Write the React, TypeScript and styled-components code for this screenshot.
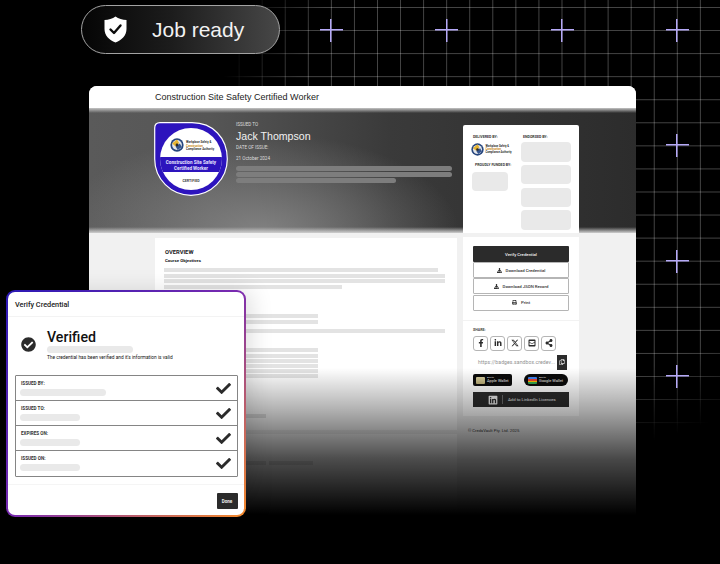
import React from 'react'
import styled, { createGlobalStyle } from 'styled-components'
import { FaCheck, FaCheckCircle, FaDownload, FaPrint, FaFacebookF, FaLinkedinIn, FaShareAlt, FaEnvelopeSquare, FaRegCopy, FaLinkedin } from 'react-icons/fa'
import { FaXTwitter } from 'react-icons/fa6'

const GlobalStyle = createGlobalStyle`
  html, body {
    margin: 0;
    padding: 0;
    background: #000;
  }
  * {
    box-sizing: border-box;
  }
`

const Page = styled.div`
  position: relative;
  width: 720px;
  height: 564px;
  overflow: hidden;
  background: #000;
  padding-top: 5px;
  font-family: Roboto, 'Liberation Sans', sans-serif;
`

const GridLayer = styled.div`
  position: absolute;
  inset: 0;
  background-image:
    linear-gradient(to right, rgba(255, 255, 255, 0.27) 1px, transparent 1px),
    linear-gradient(to bottom, rgba(255, 255, 255, 0.27) 1px, transparent 1px);
  background-size: 23.07px 23.07px;
  background-position: 8px 7px;
  mask-image: radial-gradient(ellipse 350px 330px at 570px 120px, #000 78%, transparent 100%);
`

const Plus = styled.span<{ $x: number; $y: number }>`
  position: absolute;
  left: ${p => p.$x - 12}px;
  top: ${p => p.$y - 12}px;
  width: 24px;
  height: 24px;
  background:
    linear-gradient(#b5a9f7, #b5a9f7) center / 23px 1.5px no-repeat,
    linear-gradient(#b5a9f7, #b5a9f7) center / 1.5px 23px no-repeat;
`

const Pill = styled.div`
  position: relative;
  width: 199px;
  height: 49px;
  margin-left: 81px;
  display: flex;
  align-items: center;
  padding-left: 22px;
  gap: 25px;
  border: 1px solid #a3a3a3;
  border-radius: 25px;
  background: linear-gradient(90deg, #050505 0%, #1c1c1c 45%, #474747 100%);
`

const PillText = styled.span`
  font-family: 'Liberation Sans', Arial, sans-serif;
  font-size: 21px;
  color: #f2f2f2;
`

const CertWindow = styled.div`
  position: relative;
  width: 547px;
  height: 429px;
  margin: 32px 0 0 89px;
  border-radius: 8px 8px 0 0;
  overflow: hidden;
  background: #f1f1f1;
  &::after {
    content: '';
    position: absolute;
    inset: 282px 0 0 0;
    background: linear-gradient(180deg, rgba(0, 0, 0, 0) 0%, rgba(0, 0, 0, 0.3) 28%, rgba(0, 0, 0, 0.7) 62%, #000 100%);
  }
`

const TitleBar = styled.div`
  height: 22px;
  display: flex;
  align-items: center;
  padding-left: 66px;
  background: #fff;
  color: #222;
  font-family: 'Liberation Sans', Arial, sans-serif;
  font-size: 9px;
`

const Hero = styled.div`
  height: 125px;
  display: flex;
  align-items: flex-start;
  padding: 14px 57px 0 65px;
  background:
    linear-gradient(180deg, #c4c4c4 0, rgba(90, 90, 90, 0) 5px, rgba(90, 90, 90, 0) 119px, #cfcfcf 125px),
    radial-gradient(ellipse 200px 100px at 170px 125px, #828282, rgba(120, 120, 120, 0)),
    linear-gradient(90deg, #5a5a5a 0%, #565656 22%, #3a3a3a 55%, #2c2c2c 100%);
`

const Info = styled.div`
  width: 216px;
  margin-left: 8px;
  display: flex;
  flex-direction: column;
  color: #eee;
`

const TinyLabel = styled.div<{ $mt?: number }>`
  font-size: 4.6px;
  line-height: 6px;
  margin-top: ${p => p.$mt || 0}px;
  color: #ddd;
`

const Recipient = styled.div`
  font-family: 'Liberation Sans', Arial, sans-serif;
  font-size: 10.6px;
  line-height: 14px;
  margin-top: 1px;
  color: #f1f1f1;
`

const HeroBar = styled.div<{ $w: number; $mt?: number }>`
  width: ${p => p.$w}px;
  height: 5px;
  margin-top: ${p => p.$mt ?? 1}px;
  border-radius: 3px;
  background: #7d7d7d;
`

const HeroCard = styled.div`
  width: 116px;
  height: 108px;
  margin: 3px 0 0 11px;
  padding: 10px 8px 0 9px;
  display: flex;
  justify-content: space-between;
  background: #fff;
  border-radius: 2px 2px 0 0;
`

const HeroCol = styled.div<{ $w: number }>`
  width: ${p => p.$w}px;
  display: flex;
  flex-direction: column;
`

const CardLabel = styled.div<{ $mt?: number; $ml?: number }>`
  font-size: 3.6px;
  line-height: 5px;
  font-weight: 700;
  color: #333;
  margin-top: ${p => p.$mt || 0}px;
  margin-left: ${p => p.$ml || 0}px;
`

const GrayBox = styled.div<{ $w: number; $h: number; $mt: number }>`
  width: ${p => p.$w}px;
  height: ${p => p.$h}px;
  margin-top: ${p => p.$mt}px;
  background: #e9e9e9;
  border-radius: 4px;
`

const LogoRow = styled.div`
  display: flex;
  align-items: center;
  gap: 1.5px;
  margin-top: 3px;
  margin-left: -1px;
`

const LogoText = styled.div`
  font-size: 2.7px;
  line-height: 3.2px;
  font-weight: 700;
  color: #333;
  white-space: nowrap;
  & > i {
    font-style: normal;
    color: #c9871d;
  }
`

const Body = styled.div`
  display: flex;
  gap: 6px;
  padding: 5px 0 0 66px;
`

const LeftCol = styled.div`
  width: 302px;
  display: flex;
  flex-direction: column;
  gap: 4px;
`

const OverviewCard = styled.div<{ $h: number }>`
  height: ${p => p.$h}px;
  padding: 11px 10px 0 9px;
  background: #fff;
  display: flex;
  flex-direction: column;
`

const OverviewTitle = styled.div`
  font-size: 5.8px;
  line-height: 7px;
  font-weight: 700;
  margin-left: 1px;
  color: #222;
`

const SubTitle = styled.div`
  font-size: 4.4px;
  line-height: 6px;
  font-weight: 700;
  margin: 2px 0 0 1px;
  color: #222;
`

const Line = styled.div<{ $w: number; $mt?: number }>`
  width: ${p => p.$w}px;
  height: 4px;
  margin-top: ${p => p.$mt ?? 1.5}px;
  background: #e3e3e3;
  flex: none;
`

const LineRow = styled.div<{ $mt: number }>`
  display: flex;
  gap: 3px;
  margin-top: ${p => p.$mt}px;
`

const RightCol = styled.div`
  width: 116px;
  margin-top: -1px;
  display: flex;
  flex-direction: column;
`

const SideCard = styled.div`
  height: 179px;
  padding: 9px 10px 0;
  background: #fff;
  display: flex;
  flex-direction: column;
`

const SideButton = styled.div<{ $dark?: boolean }>`
  height: 16px;
  margin-bottom: 0.2px;
  flex: none;
  display: flex;
  align-items: center;
  justify-content: center;
  gap: 4px;
  font-size: 4.3px;
  font-weight: 500;
  color: ${p => (p.$dark ? '#eee' : '#333')};
  background: ${p => (p.$dark ? '#2b2b2b' : '#fff')};
  border: ${p => (p.$dark ? 'none' : '1px solid #b5b5b5')};
  border-radius: 1px;
`

const ShareSection = styled.div`
  margin: 9px -10px 0;
  padding: 7px 10px 0;
  border-top: 1px solid #f2f2f2;
`

const ShareLabel = styled.div`
  font-size: 3.6px;
  line-height: 5px;
  font-weight: 700;
  color: #444;
`

const ShareRow = styled.div`
  display: flex;
  gap: 2px;
  margin-top: 3px;
`

const ShareIcon = styled.div`
  width: 15px;
  height: 15px;
  display: flex;
  align-items: center;
  justify-content: center;
  border: 1px solid #b5b5b5;
  border-radius: 3px;
  color: #2b2b2b;
  font-size: 8px;
`

const UrlRow = styled.div`
  display: flex;
  align-items: center;
  justify-content: space-between;
  height: 15px;
  margin-top: 4px;
  padding: 0 2px 0 5px;
  font-size: 5.1px;
  letter-spacing: 0.1px;
  white-space: nowrap;
  color: #8f8f8f;
`

const CopyButton = styled.div`
  width: 10px;
  height: 15px;
  display: flex;
  align-items: center;
  justify-content: center;
  background: #2b2b2b;
  color: #eee;
  font-size: 6px;
`

const WalletRow = styled.div`
  display: flex;
  justify-content: space-between;
  margin-top: 4px;
  margin-right: 1px;
`

const WalletButton = styled.div<{ $w: number; $r: number }>`
  width: ${p => p.$w}px;
  height: 12.5px;
  border-radius: ${p => p.$r}px;
  background: #0b0b0b;
  display: flex;
  align-items: center;
  gap: 2px;
  padding-left: ${p => p.$r > 3 ? 4 : 3}px;
  color: #eee;
`

const WalletCard = styled.div<{ $google?: boolean }>`
  width: 9px;
  height: 7px;
  border-radius: 1px;
  flex: none;
  background: ${p =>
    p.$google
      ? 'linear-gradient(180deg, #4285f4 0 30%, #ea4335 30% 55%, #fbbc04 55% 78%, #34a853 78%)'
      : 'linear-gradient(180deg, #d8cfa0, #b9ad76)'};
`

const WalletText = styled.div`
  font-size: 3.9px;
  line-height: 3.9px;
  white-space: nowrap;
  & > small {
    display: block;
    font-size: 2.4px;
    line-height: 2.8px;
  }
`

const LinkedInButton = styled.div`
  height: 15px;
  margin-top: 6px;
  display: flex;
  align-items: center;
  background: #2b2b2b;
  color: #eee;
  font-size: 4.3px;
  padding-left: 15px;
  & > svg {
    font-size: 10px;
    margin-right: 4px;
  }
`

const LinkedInDivider = styled.span`
  width: 1px;
  height: 9px;
  margin-right: 5px;
  background: #6b6b6b;
`

const Copyright = styled.div`
  margin: 12px 0 0 5px;
  font-size: 4.2px;
  line-height: 6px;
  color: #333;
`

const Modal = styled.div`
  position: absolute;
  left: 5.5px;
  top: 290px;
  width: 240px;
  height: 226.5px;
  padding: 2px;
  border-radius: 9px;
  background: linear-gradient(135deg, #2a18b4 0%, #7a2bb0 50%, #f58a2a 100%);
  box-shadow: 6px 0 22px rgba(0, 0, 0, 0.12);
  z-index: 2;
`

const ModalInner = styled.div`
  width: 100%;
  height: 100%;
  border-radius: 7px;
  background: #fff;
  display: flex;
  flex-direction: column;
`

const ModalHeader = styled.div`
  height: 25px;
  flex: none;
  display: flex;
  align-items: center;
  padding-left: 7.5px;
  border-bottom: 1px solid #f3f3f3;
  font-size: 7.3px;
  font-weight: 500;
  color: #222;
`

const StatusRow = styled.div`
  height: 58px;
  flex: none;
  display: flex;
  align-items: center;
  padding: 0 0 4px 13.5px;
  gap: 11px;
  color: #2b2b2b;
  & > svg {
    font-size: 15px;
  }
`

const StatusCol = styled.div`
  display: flex;
  flex-direction: column;
  color: #111;
`

const VerifiedTitle = styled.div`
  font-size: 14.2px;
  line-height: 18px;
  font-weight: 500;
`

const Skeleton = styled.div<{ $w: number }>`
  width: ${p => p.$w}px;
  height: 7px;
  border-radius: 4px;
  background: #e9e9e9;
`

const StatusNote = styled.div`
  font-size: 4.8px;
  line-height: 6px;
  margin-top: 2px;
  white-space: nowrap;
`

const CheckTable = styled.div`
  margin: 0 6px 0 7.5px;
  border: 1px solid #858585;
  border-radius: 1px;
  display: flex;
  flex-direction: column;
`

const CheckRow = styled.div`
  height: 25px;
  display: flex;
  align-items: center;
  justify-content: space-between;
  padding: 0 6px 0 4px;
  color: #2b2b2b;
  &:not(:last-child) {
    border-bottom: 1px solid #858585;
  }
  & > svg {
    font-size: 15px;
  }
`

const CheckText = styled.div`
  display: flex;
  flex-direction: column;
  gap: 2px;
`

const CheckLabel = styled.div`
  font-size: 4.6px;
  line-height: 6px;
  font-weight: 700;
  margin-left: 1px;
  color: #333;
`

const ModalFooter = styled.div`
  margin-top: 7px;
  border-top: 1px solid #f5f5f5;
  padding: 8px 6px 0 0;
  display: flex;
  justify-content: flex-end;
`

const DoneButton = styled.div`
  width: 21px;
  height: 16px;
  display: flex;
  align-items: center;
  justify-content: center;
  background: #2b2b2b;
  color: #eee;
  font-size: 4.6px;
  font-weight: 700;
  border-radius: 1px;
`

function EmblemShapes() {
  return (
    <>
      <circle cx="10" cy="10" r="9.5" fill="#26467e" />
      <circle cx="10" cy="10" r="7" fill="#e3e6ea" />
      <path d="M3 8 L10 2 L13 7 L8 12 Z" fill="#e7b531" />
      <path d="M8 12 L14 8 L17 13 L11 17 Z" fill="#35558f" />
      <circle cx="10" cy="10" r="2" fill="#2b2b2b" />
    </>
  )
}

function Emblem({ size }: { size: number }) {
  return (
    <svg width={size} height={size} viewBox="0 0 20 20">
      <EmblemShapes />
    </svg>
  )
}

function Badge() {
  return (
    <svg width="74" height="75" viewBox="0 0 74 75" style={{ flex: 'none' }}>
      <defs>
        <clipPath id="dome">
          <circle cx="37" cy="37" r="31" />
        </clipPath>
      </defs>
      <path d="M6 .7 H38 C59 .7 73.3 16 73.3 37 A36.2 36.2 0 0 1 .7 37 V6 Q.7 .7 6 .7 Z" fill="#2d14bd" stroke="#fff" strokeWidth="1.2" />
      <g clipPath="url(#dome)">
        <rect x="0" y="0" width="74" height="74" fill="#fff" />
        <rect x="0" y="35" width="74" height="15" fill="#2d14bd" />
      </g>
      <svg x="16" y="16" width="14" height="14" viewBox="0 0 20 20">
        <EmblemShapes />
      </svg>
      <g fontFamily="Roboto, sans-serif" fontWeight="700">
        <text x="32" y="21" fontSize="2.9" fill="#333">Workplace Safety &amp;</text>
        <text x="32" y="24.5" fontSize="2.9" fill="#c9871d">Construction</text>
        <text x="32" y="28" fontSize="2.9" fill="#333">Compliance Authority</text>
        <text x="37" y="41.5" fontSize="4.6" fill="#e8e4ff" textAnchor="middle">Construction Site Safety</text>
        <text x="37" y="47.5" fontSize="4.6" fill="#e8e4ff" textAnchor="middle">Certified Worker</text>
        <text x="37" y="59.5" fontSize="3.6" fill="#444" textAnchor="middle">CERTIFIED</text>
      </g>
    </svg>
  )
}

function ShieldIcon() {
  return (
    <svg width="23" height="27" viewBox="0 0 23 27" style={{ flex: 'none' }}>
      <path d="M11.5 .5 C14.5 2.8 18.5 4 22.5 4 V13 C22.5 19.5 18 24 11.5 26.5 C5 24 .5 19.5 .5 13 V4 C4.5 4 8.5 2.8 11.5 .5 Z" fill="#fff" />
      <path d="M6.5 13.5 L10 17 L16.5 9.5" fill="none" stroke="#0c0c0c" strokeWidth="2.4" strokeLinecap="round" strokeLinejoin="round" />
    </svg>
  )
}

const plusSigns = [
  [331, 30],
  [446.5, 30],
  [562, 30],
  [677, 30],
  [677, 145],
  [677, 261],
  [677, 376],
]

const checks = [
  { label: 'ISSUED BY:', width: 86 },
  { label: 'ISSUED TO:', width: 60 },
  { label: 'EXPIRES ON:', width: 60 },
  { label: 'ISSUED ON:', width: 60 },
]

export default function App() {
  return (
    <Page>
      <GlobalStyle />
      <GridLayer />
      {plusSigns.map(([x, y]) => (
        <Plus key={`${x}-${y}`} $x={x} $y={y} />
      ))}
      <Pill>
        <ShieldIcon />
        <PillText>Job ready</PillText>
      </Pill>
      <CertWindow>
        <TitleBar>Construction Site Safety Certified Worker</TitleBar>
        <Hero>
          <Badge />
          <Info>
            <TinyLabel>ISSUED TO</TinyLabel>
            <Recipient>Jack Thompson</Recipient>
            <TinyLabel $mt={2}>DATE OF ISSUE:</TinyLabel>
            <TinyLabel $mt={5}>21 October 2024</TinyLabel>
            <HeroBar $w={216} $mt={4} />
            <HeroBar $w={216} />
            <HeroBar $w={160} />
          </Info>
          <HeroCard>
            <HeroCol $w={42}>
              <CardLabel $ml={1}>DELIVERED BY:</CardLabel>
              <LogoRow>
                <Emblem size={13} />
                <LogoText>
                  Workplace Safety &amp;<br />
                  <i>Construction</i><br />
                  Compliance Authority
                </LogoText>
              </LogoRow>
              <CardLabel $mt={7} $ml={3}>PROUDLY FUNDED BY:</CardLabel>
              <GrayBox $w={36} $h={19} $mt={4} />
            </HeroCol>
            <HeroCol $w={50}>
              <CardLabel $ml={2}>ENDORSED BY:</CardLabel>
              <GrayBox $w={50} $h={20} $mt={2} />
              <GrayBox $w={50} $h={19} $mt={3} />
              <GrayBox $w={50} $h={19} $mt={4} />
              <GrayBox $w={50} $h={20} $mt={3} />
            </HeroCol>
          </HeroCard>
        </Hero>
        <Body>
          <LeftCol>
            <OverviewCard $h={192}>
              <OverviewTitle>OVERVIEW</OverviewTitle>
              <SubTitle>Course Objectives</SubTitle>
              <Line $w={274} $mt={4} />
              <Line $w={281} />
              <Line $w={281} />
              <Line $w={178} />
              <Line $w={154} $mt={25.5} />
              <Line $w={154} $mt={2} />
              <Line $w={281} $mt={5} />
              <Line $w={154} $mt={15} />
              <Line $w={154} $mt={2} />
              <Line $w={154} $mt={1} />
              <Line $w={154} $mt={1} />
              <Line $w={154} $mt={1} />
              <Line $w={154} $mt={1} />
              <Line $w={102} $mt={36} />
            </OverviewCard>
            <OverviewCard $h={80}>
              <LineRow $mt={16}>
                <Line $w={102} $mt={0} />
                <Line $w={44} $mt={0} />
              </LineRow>
            </OverviewCard>
          </LeftCol>
          <RightCol>
            <SideCard>
              <SideButton $dark>Verify Credential</SideButton>
              <SideButton><FaDownload size={5} />Download Credential</SideButton>
              <SideButton><FaDownload size={5} />Download JSON Record</SideButton>
              <SideButton><FaPrint size={5} />Print</SideButton>
              <ShareSection>
                <ShareLabel>SHARE:</ShareLabel>
                <ShareRow>
                  <ShareIcon><FaFacebookF /></ShareIcon>
                  <ShareIcon><FaLinkedinIn /></ShareIcon>
                  <ShareIcon><FaXTwitter /></ShareIcon>
                  <ShareIcon><FaEnvelopeSquare /></ShareIcon>
                  <ShareIcon><FaShareAlt /></ShareIcon>
                </ShareRow>
                <UrlRow>
                  https://badges.sandbox.credev...
                  <CopyButton><FaRegCopy /></CopyButton>
                </UrlRow>
                <WalletRow>
                  <WalletButton $w={39} $r={2}>
                    <WalletCard />
                    <WalletText><small>Add to</small>Apple Wallet</WalletText>
                  </WalletButton>
                  <WalletButton $w={44} $r={6}>
                    <WalletCard $google />
                    <WalletText><small>Add to</small>Google Wallet</WalletText>
                  </WalletButton>
                </WalletRow>
                <LinkedInButton>
                  <FaLinkedin />
                  <LinkedInDivider />
                  Add to LinkedIn Licences
                </LinkedInButton>
              </ShareSection>
            </SideCard>
            <Copyright>© CredsVault Pty. Ltd. 2025</Copyright>
          </RightCol>
        </Body>
      </CertWindow>
      <Modal>
        <ModalInner>
          <ModalHeader>Verify Credential</ModalHeader>
          <StatusRow>
            <FaCheckCircle />
            <StatusCol>
              <VerifiedTitle>Verified</VerifiedTitle>
              <Skeleton $w={86} />
              <StatusNote>The credential has been verified and it's information is valid</StatusNote>
            </StatusCol>
          </StatusRow>
          <CheckTable>
            {checks.map(({ label, width }) => (
              <CheckRow key={label}>
                <CheckText>
                  <CheckLabel>{label}</CheckLabel>
                  <Skeleton $w={width} />
                </CheckText>
                <FaCheck />
              </CheckRow>
            ))}
          </CheckTable>
          <ModalFooter>
            <DoneButton>Done</DoneButton>
          </ModalFooter>
        </ModalInner>
      </Modal>
    </Page>
  )
}
